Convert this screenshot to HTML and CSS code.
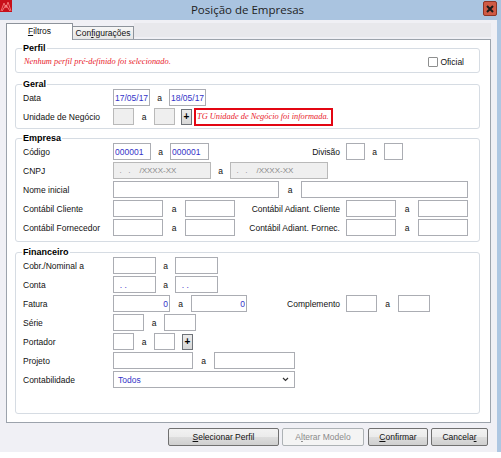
FILE: index.html
```html
<!DOCTYPE html>
<html lang="pt">
<head>
<meta charset="utf-8">
<title>Posição de Empresas</title>
<link rel="stylesheet" href="styles.css">
</head>
<body>
<div class="window">
  <div class="titlebar">
    <svg class="appicon" width="12" height="12" viewBox="0 0 12 12">
      <rect width="12" height="12" fill="#c8101a"/>
      <path d="M1 11 L4 3 L6 8 L8 2 L11 11" fill="none" stroke="#f07070" stroke-width="1"/>
      <path d="M2 11 L6 5 L10 11" fill="none" stroke="#ff9a9a" stroke-width="0.8"/>
    </svg>
    <div class="title">Posição de Empresas</div>
    <div class="close"><svg width="8" height="8" viewBox="0 0 8 8"><path d="M1 1 L7 7 M7 1 L1 7" stroke="#1a1a1a" stroke-width="2"/></svg></div>
  </div>
  <div class="client">
    <div class="tabs">
      <div class="tab active"><u>F</u>iltros</div>
      <div class="tab">Con<u>f</u>igurações</div>
      <div class="tabband"></div>
    </div>
    <div class="panel">
      <fieldset class="group g-perfil">
        <legend>Perfil</legend>
        <div class="row">
          <span class="warn">Nenhum perfil pré-definido foi selecionado.</span>
          <label class="check"><span class="box"></span>Oficial</label>
        </div>
      </fieldset>

      <fieldset class="group g-geral">
        <legend>Geral</legend>
        <div class="row">
          <span class="lbl">Data</span>
          <input class="fld w37" value="17/05/17" readonly>
          <span class="sep s19">a</span>
          <input class="fld w37" value="18/05/17" readonly>
        </div>
        <div class="row">
          <span class="lbl">Unidade de Negócio</span>
          <input class="fld dis w21" value="" readonly>
          <span class="sep s20">a</span>
          <input class="fld dis w21" value="" readonly>
          <span class="plus ml6">+</span>
          <span class="redbox">TG Unidade de Negócio foi informada.</span>
        </div>
      </fieldset>

      <fieldset class="group g-empresa">
        <legend>Empresa</legend>
        <div class="row">
          <div class="main">
            <span class="lbl">Código</span>
            <input class="fld w38" value="000001" readonly>
            <span class="sep s19">a</span>
            <input class="fld w39" value="000001" readonly>
            <span class="rlbl">Divisão</span>
          </div>
          <input class="fld w19" value="" readonly>
          <span class="sep s19">a</span>
          <input class="fld w19" value="" readonly>
        </div>
        <div class="row">
          <span class="lbl">CNPJ</span>
          <input class="fld dis mask w98" value="  .   .    /XXXX-XX" readonly>
          <span class="sep s19">a</span>
          <input class="fld dis mask w98" value="  .   .    /XXXX-XX" readonly>
        </div>
        <div class="row">
          <span class="lbl">Nome inicial</span>
          <input class="fld w166" value="" readonly>
          <span class="sep s22">a</span>
          <input class="fld w167" value="" readonly>
        </div>
        <div class="row">
          <div class="main">
            <span class="lbl">Contábil Cliente</span>
            <input class="fld w50" value="" readonly>
            <span class="sep s22">a</span>
            <input class="fld w50" value="" readonly>
            <span class="rlbl">Contábil Adiant. Cliente</span>
          </div>
          <input class="fld w50" value="" readonly>
          <span class="sep s22">a</span>
          <input class="fld w50" value="" readonly>
        </div>
        <div class="row">
          <div class="main">
            <span class="lbl">Contábil Fornecedor</span>
            <input class="fld w50" value="" readonly>
            <span class="sep s22">a</span>
            <input class="fld w50" value="" readonly>
            <span class="rlbl">Contábil Adiant. Fornec.</span>
          </div>
          <input class="fld w50" value="" readonly>
          <span class="sep s22">a</span>
          <input class="fld w50" value="" readonly>
        </div>
      </fieldset>

      <fieldset class="group g-fin">
        <legend>Financeiro</legend>
        <div class="row">
          <span class="lbl">Cobr./Nominal a</span>
          <input class="fld w43" value="" readonly>
          <span class="sep s19">a</span>
          <input class="fld w43" value="" readonly>
        </div>
        <div class="row">
          <span class="lbl">Conta</span>
          <input class="fld w43" value="  . ." readonly>
          <span class="sep s19">a</span>
          <input class="fld w43" value="  . ." readonly>
        </div>
        <div class="row">
          <div class="main">
            <span class="lbl">Fatura</span>
            <input class="fld num w57" value="0" readonly>
            <span class="sep s21">a</span>
            <input class="fld num w56" value="0" readonly>
            <span class="rlbl">Complemento</span>
          </div>
          <input class="fld w31" value="" readonly>
          <span class="sep s21">a</span>
          <input class="fld w32" value="" readonly>
        </div>
        <div class="row">
          <span class="lbl">Série</span>
          <input class="fld w31" value="" readonly>
          <span class="sep s20">a</span>
          <input class="fld w32" value="" readonly>
        </div>
        <div class="row">
          <span class="lbl">Portador</span>
          <input class="fld w21" value="" readonly>
          <span class="sep s20">a</span>
          <input class="fld w21" value="" readonly>
          <span class="plus ml7">+</span>
        </div>
        <div class="row">
          <span class="lbl">Projeto</span>
          <input class="fld w80" value="" readonly>
          <span class="sep s21">a</span>
          <input class="fld w81" value="" readonly>
        </div>
        <div class="row">
          <span class="lbl">Contabilidade</span>
          <div class="select w182">
            <span>Todos</span>
            <svg width="7" height="5" viewBox="0 0 7 5"><path d="M1 1 L3.5 3.5 L6 1" fill="none" stroke="#333" stroke-width="1.2"/></svg>
          </div>
        </div>
      </fieldset>
    </div>
    <div class="buttons">
      <button class="btn b111"><u>S</u>elecionar Perfil</button>
      <button class="btn b82" disabled>A<u>l</u>terar Modelo</button>
      <button class="btn b60"><u>C</u>onfirmar</button>
      <button class="btn b57">Cancela<u>r</u></button>
    </div>
  </div>
</div>
</body>
</html>
```

FILE: styles.css
```css
* { box-sizing: border-box; }
html, body {
  margin: 0;
  padding: 0;
  width: 501px;
  height: 458px;
  overflow: hidden;
  background: #ffffff;
  font-family: "Liberation Sans", Arial, sans-serif;
}
.window {
  width: 501px;
  height: 452px;
  display: flex;
  flex-direction: column;
  background: #aec7e2;
}
.titlebar {
  height: 20px;
  display: flex;
  align-items: flex-start;
  background: #aac4e0;
}
.appicon { display: block; }
.title {
  flex: 1;
  text-align: center;
  font-family: "Open Sans", "Noto Sans", sans-serif;
  font-size: 11.5px;
  line-height: 20px;
  color: #1e1e1e;
}
.close {
  width: 14px;
  height: 15px;
  margin: 1px 4px 0 0;
  background: #cf5a45;
  border: 1px solid #8e3526;
  border-radius: 2px;
  display: flex;
  align-items: center;
  justify-content: center;
}
.client {
  flex: 1;
  margin-right: 4px;
  background: #f0f0f5;
  padding: 3px 6px 0 6px;
  display: flex;
  flex-direction: column;
}
.tabs {
  display: flex;
  align-items: flex-end;
  height: 16px;
  position: relative;
  z-index: 1;
}
.tab {
  height: 13px;
  width: 61px;
  font-size: 8.5px;
  line-height: 12px;
  text-align: center;
  color: #111;
  border: 1px solid #8d939b;
  border-bottom: none;
  background: linear-gradient(#f6f6f6, #e6e6e6);
}
.tab.active {
  width: 67px;
  height: 17px;
  margin-bottom: -1px;
  background: #ffffff;
  line-height: 15px;
  border-color: #8d939b;
}
.tab.active + .tab { border-left: none; }
.tabband {
  flex: 1;
  height: 14px;
  align-self: flex-start;
  background: #e8e8ec;
}
.panel {
  background: #ffffff;
  border: 1px solid #9ca3ac;
  padding: 4px 10px 8px 8px;
}
.group {
  margin: 0;
  min-inline-size: 0;
  border: 1px solid #d6dce3;
  border-radius: 3px;
  padding: 0 10px 0 7px;
}
.group legend {
  font-weight: bold;
  font-size: 9px;
  line-height: 8px;
  padding: 0 1px;
  margin-left: -1px;
  color: #000;
}
.g-perfil { padding-bottom: 1px; }
.g-geral { margin-top: 7px; padding-bottom: 2px; }
.g-empresa { margin-top: 5px; padding-bottom: 4px; }
.g-fin { margin-top: 6px; padding-bottom: 24px; }
.row {
  height: 19px;
  display: flex;
  align-items: center;
  font-size: 8.5px;
  color: #111;
}
.main {
  width: 323px;
  display: flex;
  align-items: center;
}
.lbl { width: 90px; flex: none; white-space: nowrap; }
.rlbl {
  margin-left: auto;
  padding-right: 6px;
  white-space: nowrap;
}
.sep { flex: none; text-align: center; }
.s19 { width: 19px; }
.s20 { width: 20px; }
.s21 { width: 21px; }
.s22 { width: 22px; }
.fld {
  flex: none;
  height: 17px;
  margin: 0;
  border: 1px solid #abadb3;
  background: #ffffff;
  font-family: "Liberation Sans", Arial, sans-serif;
  font-size: 8.5px;
  color: #3434c8;
  padding: 0 1px 0 1px;
  outline: none;
}
.fld.dis { background: #efefef; border-color: #b9b9b9; }
.fld.mask { color: #8a8a8a; font-size: 8px; }
.fld.num { text-align: right; }
.w19 { width: 19px; } .w21 { width: 21px; } .w31 { width: 31px; } .w32 { width: 32px; }
.w37 { width: 37px; } .w38 { width: 38px; } .w39 { width: 39px; } .w43 { width: 43px; }
.w50 { width: 50px; } .w56 { width: 56px; } .w57 { width: 57px; } .w80 { width: 80px; }
.w81 { width: 81px; } .w98 { width: 98px; } .w166 { width: 166px; } .w167 { width: 167px; }
.w182 { width: 182px; }
.plus {
  flex: none;
  width: 11px;
  height: 16px;
  border: 1px solid #6f7379;
  background: linear-gradient(#ececec, #d8d8d8);
  font-weight: bold;
  font-size: 10px;
  line-height: 13px;
  text-align: center;
  color: #000;
}
.ml6 { margin-left: 6px; }
.ml7 { margin-left: 7px; }
.redbox {
  flex: none;
  margin-left: 2px;
  width: 139px;
  height: 18px;
  border: 2px solid #e30613;
  font-family: "Liberation Serif", "Times New Roman", serif;
  font-style: italic;
  font-size: 8.4px;
  line-height: 14px;
  color: #e8202a;
  padding-left: 1px;
  white-space: nowrap;
  overflow: hidden;
}
.warn {
  margin-left: 1px;
  font-family: "Liberation Serif", "Times New Roman", serif;
  font-style: italic;
  font-size: 8.4px;
  color: #e8202a;
}
.check {
  margin-left: auto;
  margin-right: 5px;
  display: flex;
  align-items: center;
  font-size: 8.5px;
  color: #111;
}
.box {
  width: 10px;
  height: 10px;
  border: 1px solid #8e8f8f;
  border-radius: 1px;
  background: #fff;
  margin-right: 2px;
}
.select {
  flex: none;
  height: 17px;
  border: 1px solid #abadb3;
  background: #fff;
  display: flex;
  align-items: center;
  justify-content: space-between;
  padding: 0 5px 0 4px;
  color: #3434c8;
  font-size: 8.5px;
}
.buttons {
  display: flex;
  justify-content: flex-end;
  gap: 3px;
  padding-right: 3px;
  margin-top: 5px;
}
.btn {
  height: 18px;
  margin: 0;
  padding: 0;
  border: 1px solid #707070;
  border-radius: 2px;
  background: linear-gradient(#f2f2f2 0%, #ebebeb 50%, #dddddd 51%, #cfcfcf 100%);
  font-family: "Liberation Sans", Arial, sans-serif;
  font-size: 8.5px;
  color: #111;
}
.btn:disabled {
  background: #f4f4f4;
  border-color: #adb2b5;
  color: #8a8a8a;
}
.b111 { width: 111px; }
.b82 { width: 82px; }
.b60 { width: 60px; margin-left: 1px; }
.b57 { width: 57px; }
```
